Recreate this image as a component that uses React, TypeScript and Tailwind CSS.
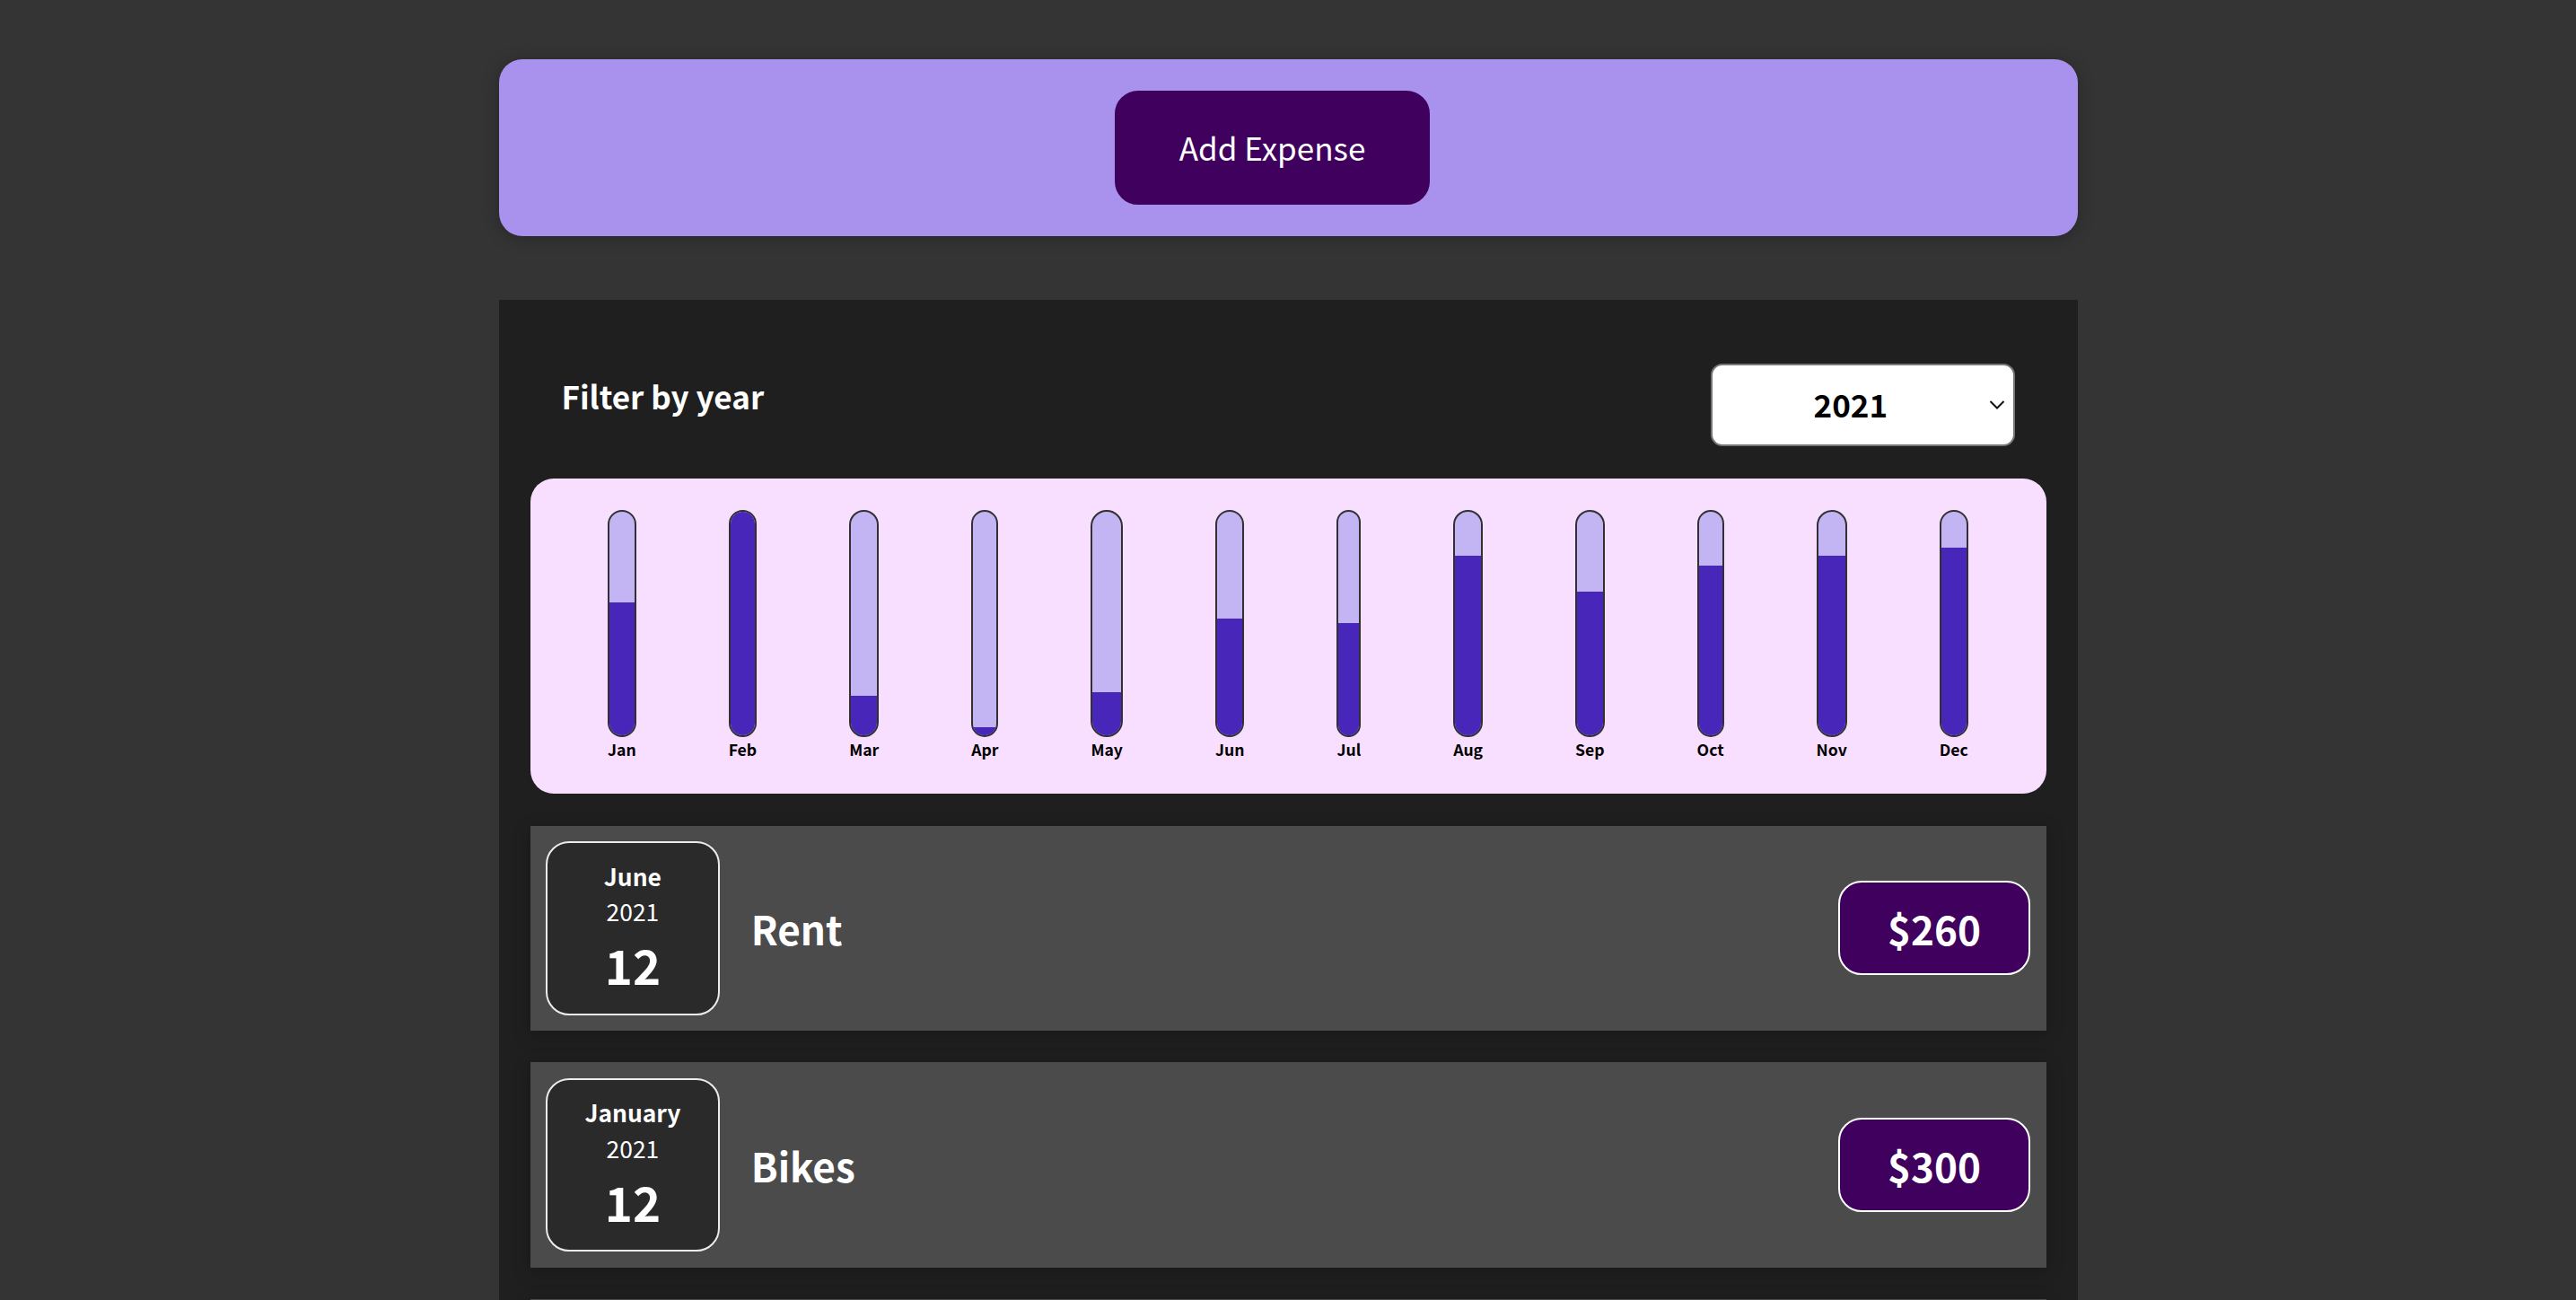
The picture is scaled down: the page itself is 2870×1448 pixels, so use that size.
import React from "react";

const bars: { label: string; fill: number }[] = [
  { label: "Jan", fill: 0.595 },
  { label: "Feb", fill: 1 },
  { label: "Mar", fill: 0.175 },
  { label: "Apr", fill: 0.036 },
  { label: "May", fill: 0.194 },
  { label: "Jun", fill: 0.52 },
  { label: "Jul", fill: 0.5 },
  { label: "Aug", fill: 0.8 },
  { label: "Sep", fill: 0.64 },
  { label: "Oct", fill: 0.758 },
  { label: "Nov", fill: 0.8 },
  { label: "Dec", fill: 0.837 },
];

const items = [
  { month: "June", year: "2021", day: "12", title: "Rent", price: "$260" },
  { month: "January", year: "2021", day: "12", title: "Bikes", price: "$300" },
  { month: "March", year: "2021", day: "28", title: "Car Insurance", price: "$294" },
];

function ChartBar({ label, fill }: { label: string; fill: number }) {
  return (
    <div className="flex h-full flex-col items-center">
      <div className="flex h-full w-full flex-col justify-end overflow-hidden rounded-[26px] border-[2px] border-[#313131] bg-[#c3b4f3]">
        <div className="w-full bg-[#4826b9]" style={{ height: `${fill * 100}%` }} />
      </div>
      <div className="pt-[1px] text-center text-[17.6px] font-bold text-black">{label}</div>
    </div>
  );
}

function ExpenseItem({
  month,
  year,
  day,
  title,
  price,
}: {
  month: string;
  year: string;
  day: string;
  title: string;
  price: string;
}) {
  return (
    <li className="flex items-center justify-between bg-[#4b4b4b] p-[17.6px] shadow-[0_4px_18px_rgba(0,0,0,0.25)]">
      <div className="flex h-[193.6px] w-[193.6px] shrink-0 flex-col items-center justify-center rounded-[26px] border-[2px] border-[#ececec] bg-[#2a2a2a] pt-[2px] text-white">
        <div className="text-[26.4px] font-bold">{month}</div>
        <div className="text-[26.4px]">{year}</div>
        <div className="text-[52.8px] font-bold">{day}</div>
      </div>
      <div className="flex flex-1 items-center">
        <h2 className="mx-[35px] flex-1 text-[44px] font-bold text-white">{title}</h2>
        <div className="rounded-[26px] border-[2px] border-white bg-[#40005d] px-[53px] py-[17.6px] text-[44px] font-bold text-white">
          {price}
        </div>
      </div>
    </li>
  );
}

export default function App() {
  return (
    <div className="min-h-screen bg-[#343434] pt-[66px] font-['Noto_Sans_CJK_JP','Noto_Sans',sans-serif]">
      <div className="mx-auto w-[1759px] rounded-[26px] bg-[#a892ee] p-[35px] text-center shadow-[0_2px_18px_rgba(0,0,0,0.25)]">
        <button className="mr-[35px] rounded-[26px] border-[2px] border-[#40005d] bg-[#40005d] px-[70px] py-[35px] text-[35px] text-white">
          Add Expense
        </button>
      </div>

      <div className="mx-auto mt-[71px] w-[1759px] bg-[#1f1f1f] p-[35px]">
        <div className="px-[35px] text-white">
          <div className="my-[36px] flex w-full items-center justify-between">
            <label className="mb-[17.6px] text-[35px] font-bold">Filter by year</label>
            <div className="relative flex h-[92px] w-[339px] items-center rounded-[13px] border-[2px] border-[#767676] bg-white pl-[113px] text-[35px] font-bold text-black">
              2021
              <svg
                className="absolute right-[9px] top-1/2 -translate-y-1/2"
                width="18"
                height="11"
                viewBox="0 0 18 11"
                fill="none"
              >
                <path d="M1.5 1.5 L9 9 L16.5 1.5" stroke="#111" strokeWidth="2" />
              </svg>
            </div>
          </div>
        </div>

        <div className="flex h-[351px] justify-around rounded-[26px] bg-[#f8dfff] p-[35px] text-center">
          {bars.map((b) => (
            <ChartBar key={b.label} label={b.label} fill={b.fill} />
          ))}
        </div>

        <ul className="mt-[36px] flex flex-col gap-[35px]">
          {items.map((it) => (
            <ExpenseItem key={it.title} {...it} />
          ))}
        </ul>
      </div>
    </div>
  );
}
